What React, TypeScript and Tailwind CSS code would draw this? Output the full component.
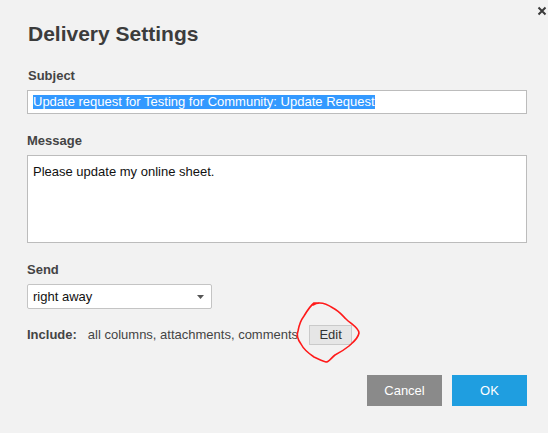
const Label = ({ children, className = '' }: { children: React.ReactNode; className?: string }) => (
  <div className={`text-[13px] leading-[16px] font-bold text-[#444] ${className}`}>{children}</div>
);

const App = () => (
  <div className="relative w-[548px] h-[433px] bg-[#f2f2f2] font-['Liberation_Sans',Arial,sans-serif] text-[#222] overflow-hidden">
    {/* close */}
    <button className="absolute left-[537px] top-[6px] w-[10px] h-[10px]" aria-label="Close">
      <svg width="10" height="10" viewBox="0 0 10 10">
        <path d="M1.5 1.5 L8.5 8.5 M8.5 1.5 L1.5 8.5" stroke="#3a3a3a" strokeWidth="2" />
      </svg>
    </button>

    <div className="pl-[27px] pr-[21px] pt-[22px]">
      <h2 className="text-[21px] leading-[24px] font-bold text-[#3c3c3c] pl-[1px]">Delivery Settings</h2>

      <Label className="mt-[22px] pl-[1px]">Subject</Label>
      <div className="mt-[6px] h-[24px] bg-white border border-[#bcbcbc] px-[5px] flex items-center text-[13px]">
        <span className="bg-[#3399ff] text-white leading-[14px]">
          Update request for Testing for Community: Update Request
        </span>
      </div>

      <Label className="mt-[19px]">Message</Label>
      <div className="mt-[6px] h-[88px] bg-white border border-[#bcbcbc] px-[5px] pt-[8px] text-[13px] leading-[16px] text-[#111]">
        Please update my online sheet.
      </div>

      <Label className="mt-[19px]">Send</Label>
      <div className="mt-[6px] w-[185px] h-[25px] bg-white border border-[#c4c4c4] rounded-[2px] pl-[5px] pr-[7px] flex items-center justify-between text-[13px] text-[#111]">
        <span>right away</span>
        <svg width="7" height="4" viewBox="0 0 7 4">
          <path d="M0 0 H7 L3.5 4 Z" fill="#555" />
        </svg>
      </div>

      <div className="mt-[16px] flex items-center h-[20px] text-[13px] leading-[16px]">
        <span className="font-bold text-[#444]">Include:</span>
        <span className="ml-[11px] text-[#444]">all columns, attachments, comments</span>
        <button className="ml-[11px] w-[43px] h-[20px] bg-[#e6e6e6] border border-[#cacaca] text-[#333] text-[13px] leading-[16px]">
          Edit
        </button>
      </div>

      <div className="mt-[30px] flex justify-end gap-[10px]">
        <button className="w-[75px] h-[31px] bg-[#8a8a8a] text-white text-[13px]">Cancel</button>
        <button className="w-[75px] h-[31px] bg-[#1f9ee0] text-white text-[13px]">OK</button>
      </div>
    </div>

    {/* hand-drawn red annotation */}
    <svg className="absolute left-[290px] top-[298px]" width="75" height="68" viewBox="0 0 75 68" fill="none">
      <path
        d="M23 7 C29 3, 37 6, 43 10 C49 13, 52 17, 56 21 C61 26, 69 30, 69 35 C68 41, 62 45, 59 48 C54 52, 49 55, 45 57 C41 60, 39 64, 36 64 C32 63, 28 61, 24 59 C18 55, 13 50, 11 46 C8 42, 6 38, 8 33 C9 27, 11 22, 14 18 C17 13, 20 8, 24 5 L29 5"
        stroke="#ff1a1a"
        strokeWidth="1.6"
        strokeLinecap="round"
        strokeLinejoin="round"
      />
    </svg>
  </div>
);

export default App;
